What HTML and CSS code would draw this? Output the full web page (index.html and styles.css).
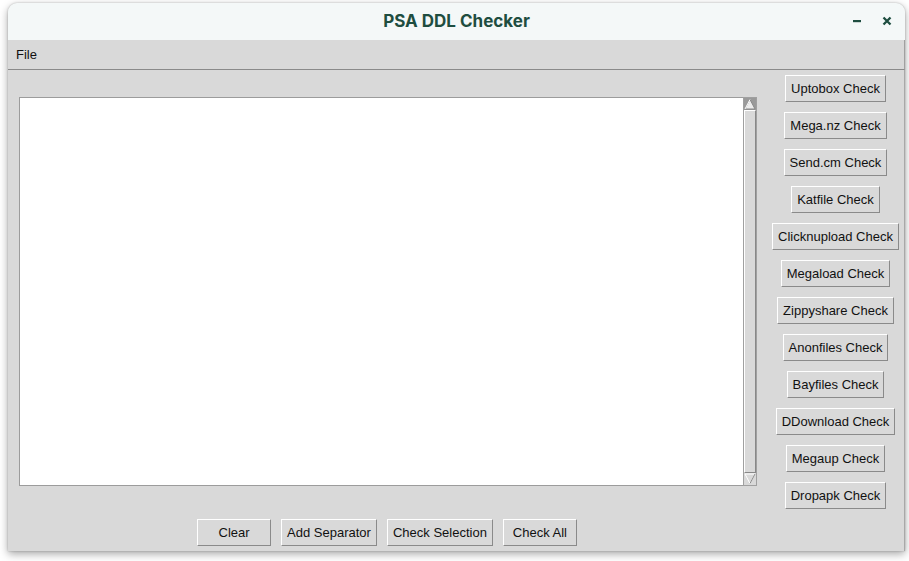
FILE: index.html
```html
<!DOCTYPE html>
<html>
<head>
<meta charset="utf-8">
<title>PSA DDL Checker</title>
<link rel="stylesheet" href="styles.css">
</head>
<body>
<div class="window">
  <div class="titlebar">
    <span class="title">PSA DDL Checker</span>
    <div class="controls">
      <span class="ctl min"><svg width="10" height="10" viewBox="0 0 10 10"><rect x="1" y="4" width="8" height="2.2" fill="#1e4d40"/></svg></span>
      <span class="ctl close"><svg width="10" height="10" viewBox="0 0 10 10"><path d="M1.5 1.5 L8.5 8.5 M8.5 1.5 L1.5 8.5" stroke="#1e4d40" stroke-width="2.3" stroke-linecap="butt"/></svg></span>
    </div>
  </div>
  <div class="menubar"><span class="menu-item">File</span></div>
  <div class="main">
    <div class="left">
      <div class="textwrap">
        <div class="textarea"></div>
        <div class="scrollbar">
          <div class="arrow up"><svg width="12" height="12" viewBox="0 0 12 12"><polygon points="6,1.5 11,11 1,11" fill="#ececec" stroke="#888" stroke-width="1"/><polyline points="1,11 6,1.5" fill="none" stroke="#fff" stroke-width="1"/></svg></div>
          <div class="slider"></div>
          <div class="arrow down"><svg width="12" height="12" viewBox="0 0 12 12"><polygon points="1,1 11,1 6,10.5" fill="#d9d9d9" stroke="#fff" stroke-width="1"/><polyline points="11,1 6,10.5" fill="none" stroke="#888" stroke-width="1"/></svg></div>
        </div>
      </div>
      <div class="bottom-row">
        <button class="btn w-clear">Clear</button>
        <button class="btn">Add Separator</button>
        <button class="btn">Check Selection</button>
        <button class="btn w-all">Check All</button>
      </div>
    </div>
    <div class="right">
      <button class="btn">Uptobox Check</button>
      <button class="btn">Mega.nz Check</button>
      <button class="btn">Send.cm Check</button>
      <button class="btn">Katfile Check</button>
      <button class="btn">Clicknupload Check</button>
      <button class="btn">Megaload Check</button>
      <button class="btn">Zippyshare Check</button>
      <button class="btn">Anonfiles Check</button>
      <button class="btn">Bayfiles Check</button>
      <button class="btn">DDownload Check</button>
      <button class="btn">Megaup Check</button>
      <button class="btn">Dropapk Check</button>
    </div>
  </div>
</div>
</body>
</html>
```
FILE: styles.css
```css
html, body {
  margin: 0;
  padding: 0;
  background: #ffffff;
  width: 909px;
  height: 561px;
  overflow: hidden;
}
body {
  padding: 3px 0 0 8px;
  box-sizing: border-box;
  font-family: "Liberation Sans", Arial, sans-serif;
}
.window {
  width: 897px;
  height: 548px;
  background: #d9d9d9;
  border-radius: 9px 9px 0 0;
  box-shadow: 0 3px 9px rgba(0,0,0,0.35), 0 0 2px rgba(0,0,0,0.25);
  display: flex;
  flex-direction: column;
  overflow: hidden;
}
.titlebar {
  height: 37px;
  padding-bottom: 2px;
  box-sizing: border-box;
  background: #f4f8f8;
  position: relative;
  display: flex;
  align-items: center;
  justify-content: center;
  flex: none;
}
.title {
  font-family: Inter, "Noto Sans", sans-serif;
  font-weight: 700;
  font-size: 17px;
  color: #1e4d40;
}
.controls {
  position: absolute;
  right: 13px;
  top: 0;
  height: 35px;
  display: flex;
  align-items: center;
  gap: 20px;
}
.ctl {
  width: 10px;
  height: 10px;
  display: flex;
}
.menubar {
  height: 29px;
  border-bottom: 1px solid #8a8a8a;
  border-right: 1px solid #a0a0a0;
  background: #d9d9d9;
  display: flex;
  align-items: center;
  padding-left: 8px;
  flex: none;
  box-sizing: content-box;
}
.menu-item {
  font-size: 13px;
  color: #111;
}
.main {
  flex: 1;
  display: flex;
  border-right: 1px solid #a8a8a8;
}
.left {
  margin-left: 11px;
  width: 738px;
  padding-top: 27px;
  display: flex;
  flex-direction: column;
}
.textwrap {
  display: flex;
  height: 389px;
}
.textarea {
  flex: 1;
  background: #ffffff;
  border: 1px solid #9c9c9c;
  border-right: none;
}
.scrollbar {
  width: 14px;
  display: flex;
  flex-direction: column;
  background: #d9d9d9;
  border: 1px solid #a0a0a0;
  box-sizing: border-box;
}
.arrow {
  height: 12px;
  display: flex;
  flex: none;
}
.arrow.up {
  background: #9a9a9a;
}
.slider {
  flex: 1;
  border-left: 1px solid #ffffff;
  border-top: 1px solid #ffffff;
  border-right: 1px solid #888;
  border-bottom: 1px solid #888;
}
.bottom-row {
  display: flex;
  justify-content: center;
  gap: 10px;
  margin-top: 33px;
  padding-right: 2px;
}
.btn {
  font-family: "Liberation Sans", Arial, sans-serif;
  font-size: 13px;
  color: #111;
  background: #d9d9d9;
  border: 1px solid;
  border-color: #ffffff #8a8a8a #8a8a8a #ffffff;
  height: 27px;
  padding: 0 5px;
  margin: 0;
  border-radius: 0;
  line-height: 25px;
  box-sizing: border-box;
  white-space: nowrap;
}
.w-clear { width: 74px; }
.w-all { width: 74px; }
.right {
  flex: 1;
  padding-left: 10px;
  padding-top: 5px;
  display: flex;
  flex-direction: column;
  align-items: center;
  gap: 10px;
}
```
